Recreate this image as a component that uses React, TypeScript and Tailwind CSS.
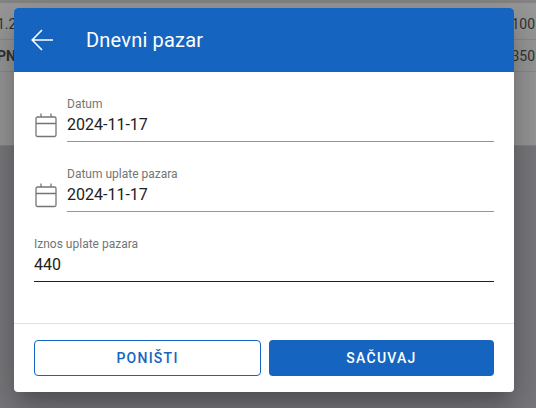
import React from 'react';

function CalendarIcon() {
  return (
    <svg width="22" height="25" viewBox="0 0 22 25" fill="none" stroke="#757575" strokeWidth="1.3">
      <rect x="1" y="4" width="20" height="19.5" rx="1.5" />
      <path d="M1 10.5h20M6 0.5v3.5M16 0.5v3.5" />
    </svg>
  );
}

function DateField({ label, value }: { label: string; value: string }) {
  return (
    <div className="flex items-end h-[50px]">
      <div className="w-[33px] pl-[1px] pb-[4px] shrink-0">
        <CalendarIcon />
      </div>
      <div className="flex-1 h-full flex flex-col border-b border-[#949494]">
        <div className="text-[12px] leading-[14px] text-[#757575] mt-[5px]">{label}</div>
        <div className="text-[16px] leading-[24px] text-[#212121] mt-[2px]">{value}</div>
      </div>
    </div>
  );
}

function BackgroundRow({ left, right, bold }: { left: string; right: string; bold?: boolean }) {
  return (
    <div className={`h-8 pt-[2px] pr-[1px] flex items-center justify-between border-b border-[#8c8c8c] text-[14px] text-[#333333] ${bold ? 'font-bold' : ''}`}>
      <span className="-ml-[3px]">{left}</span>
      <span className="font-normal">{right}</span>
    </div>
  );
}

export default function App() {
  return (
    <div className="relative w-[536px] h-[408px] overflow-hidden bg-[#7a7a7e] font-['Roboto',sans-serif]">
      <div className="h-[146px] bg-[#999999] border-t-[3px] border-[#858585] pt-[5px] border-b border-b-[#858585]">
        <BackgroundRow left="1.2" right="100" />
        <BackgroundRow left="PN" right="350" bold />
      </div>

      <div className="absolute left-[14px] top-[8px] w-[500px] h-[384px] rounded-[4px] bg-white overflow-hidden flex flex-col shadow-[0_11px_15px_-7px_rgba(0,0,0,0.2),0_24px_38px_3px_rgba(0,0,0,0.14),0_9px_46px_8px_rgba(0,0,0,0.12)]">
        <div className="h-[64px] bg-[#1565c0] flex items-center text-white shrink-0">
          <svg className="ml-[16px]" width="24" height="24" viewBox="0 0 24 24" fill="none" stroke="#ffffff" strokeWidth="1.6">
            <path d="M23 12H3M12 2 2.2 12l9.8 10" />
          </svg>
          <span className="ml-[32px] text-[20px] tracking-[0.2px]">Dnevni pazar</span>
        </div>

        <div className="flex-1 border-b border-[#e0e0e0] px-[20px] pt-[20px] flex flex-col gap-[20px]">
          <DateField label="Datum" value="2024-11-17" />
          <DateField label="Datum uplate pazara" value="2024-11-17" />
          <div className="h-[50px] flex flex-col border-b border-[#212121]">
            <div className="text-[12px] leading-[14px] text-[#757575] mt-[5px]">Iznos uplate pazara</div>
            <div className="text-[16px] leading-[24px] text-[#212121] mt-[2px]">440</div>
          </div>
        </div>

        <div className="h-[68px] shrink-0 px-[20px] pt-[16px] flex gap-[8px]">
          <button className="w-[227px] h-[36px] rounded-[4px] border border-[#1565c0] bg-white text-[#1565c0] text-[14px] font-medium tracking-[1.25px]">
            PONIŠTI
          </button>
          <button className="flex-1 h-[36px] rounded-[4px] bg-[#1565c0] text-white text-[14px] font-medium tracking-[1.25px]">
            SAČUVAJ
          </button>
        </div>
      </div>
    </div>
  );
}
